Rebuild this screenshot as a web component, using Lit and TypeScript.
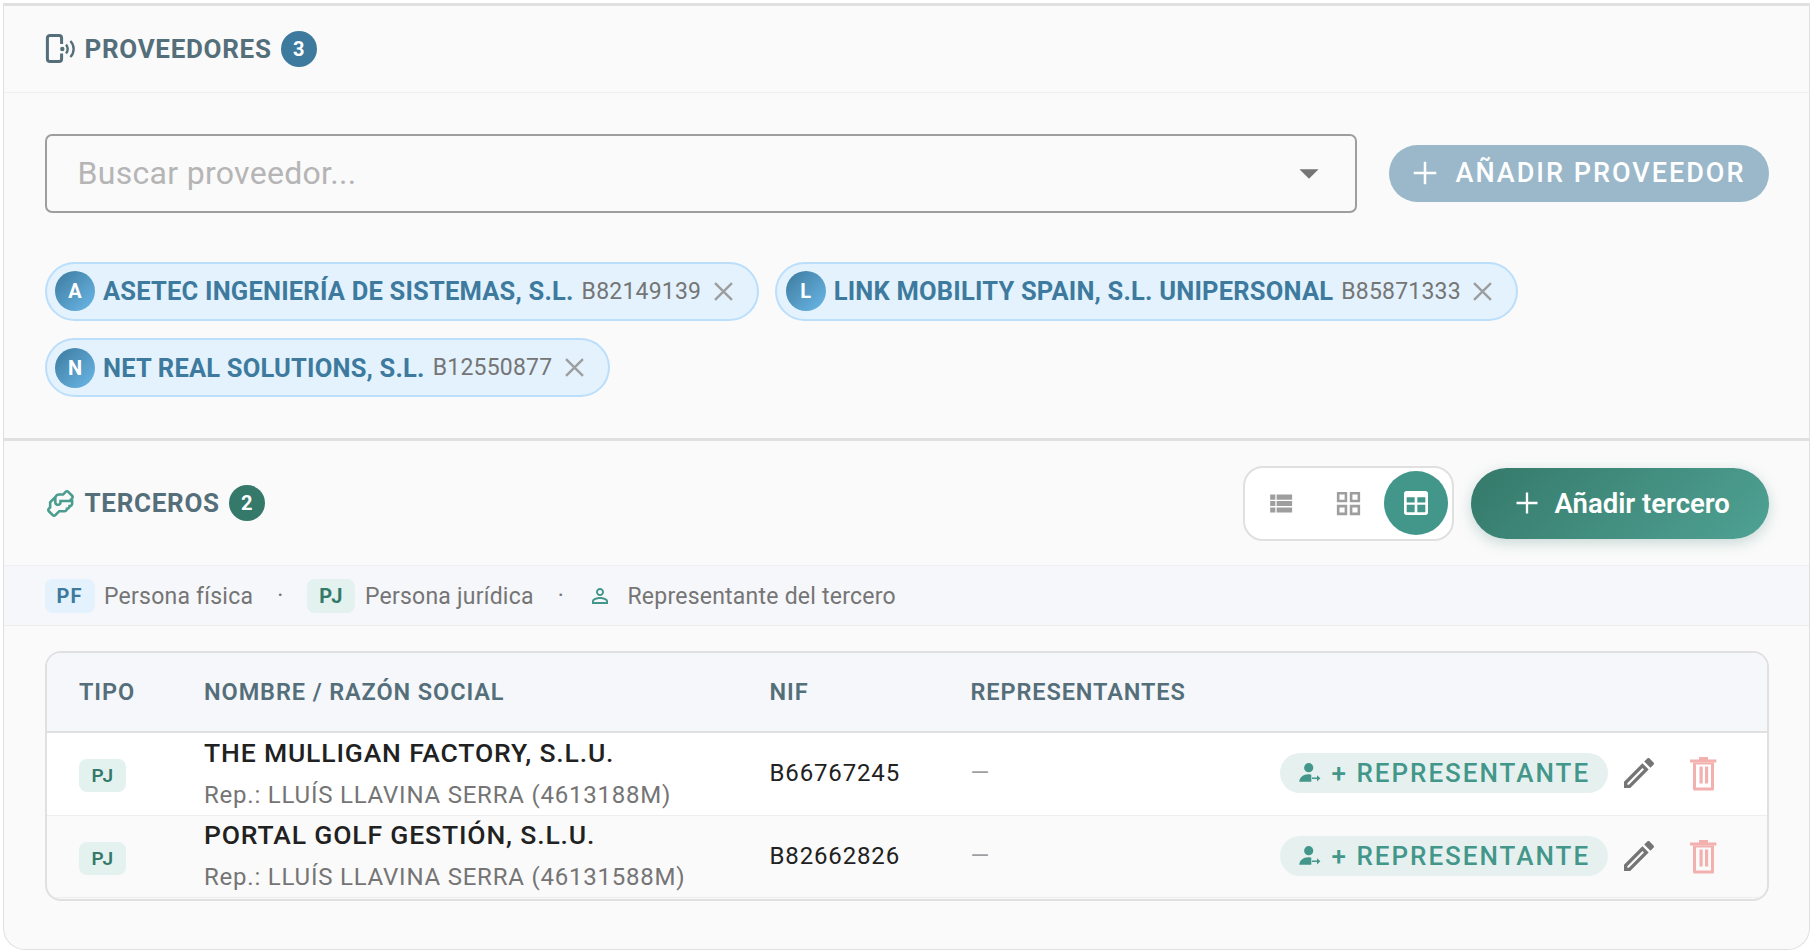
import { LitElement, html, svg, css } from 'lit';
import { customElement } from 'lit/decorators.js';

const PHONE = svg`<path d="M16.6 11V5a2.6 2.6 0 0 0-2.6-2.6H5A2.6 2.6 0 0 0 2.4 5v21A2.6 2.6 0 0 0 5 28.6h9a2.6 2.6 0 0 0 2.6-2.6v-5.5" fill="none" stroke="currentColor" stroke-width="3"/>
  <circle cx="17.3" cy="16" r="2.2" fill="currentColor"/>
  <path d="M21 11.6a6.5 6.5 0 0 1 0 8.8M25.4 8a11.5 11.5 0 0 1 0 16" fill="none" stroke="currentColor" stroke-width="2.4"/>`;
const HANDSHAKE = svg`<path d="M21.71,8.71c1.25-1.25,0.68-2.71,0-3.42l-3-3c-1.26-1.25-2.71-0.68-3.42,0L13.59,4H11C9.1,4,8,5,7.44,6.15L3,10.59v4l-0.71,0.7c-1.25,1.26-0.68,2.71,0,3.42l3,3c0.54,0.54,1.12,0.74,1.67,0.74c0.71,0,1.36-0.35,1.75-0.74l2.7-2.71H15c1.7,0,2.56-1.06,2.87-2.1c1.13-0.3,1.75-1.16,2-2C21.42,14.5,22,13.03,22,12V9h-0.59L21.71,8.71z M20,12c0,0.45-0.19,1-1,1l-1,0l0,1c0,0.45-0.19,1-1,1l-1,0l0,1c0,0.45-0.19,1-1,1h-4.41l-3.28,3.28c-0.31,0.29-0.49,0.12-0.6,0.01l-2.99-2.98c-0.29-0.31-0.12-0.49-0.01-0.6L5,15.41v-4l2-2V11c0,1.21,0.8,3,3,3s3-1.79,3-3h7V12z M20.29,7.29L18.59,9H11v2c0,0.45-0.19,1-1,1s-1-0.55-1-1V8c0-0.46,0.17-2,2-2h3.41l2.28-2.28c0.31-0.29,0.49-0.12,0.6-0.01l2.99,2.98C20.57,7,20.4,7.18,20.29,7.29z" fill="currentColor"/>`;
const LIST = svg`<path d="M4 14h4v-4H4v4zm0 5h4v-4H4v4zM4 9h4V5H4v4zm5 5h12v-4H9v4zm0 5h12v-4H9v4zM9 5v4h12V5H9z" fill="currentColor"/>`;
const GRID = svg`<path d="M3 3v8h8V3H3zm6 6H5V5h4v4zm-6 4v8h8v-8H3zm6 6H5v-4h4v4zm4-16v8h8V3h-8zm6 6h-4V5h4v4zm-6 4v8h8v-8h-8zm6 6h-4v-4h4v4z" fill="currentColor"/>`;
const TABLE = svg`<path fill-rule="evenodd" d="M5 3h14a2 2 0 0 1 2 2v14a2 2 0 0 1-2 2H5a2 2 0 0 1-2-2V5a2 2 0 0 1 2-2zM5 7.6v4h6v-4zM13 7.6v4h6v-4zM5 13.4V19h6v-5.6zM13 13.4V19h6v-5.6z" fill="currentColor"/>`;
const PERSON = svg`<path d="M12 5.9c1.16 0 2.1.94 2.1 2.1s-.94 2.1-2.1 2.1S9.9 9.16 9.9 8s.94-2.1 2.1-2.1m0 9c2.97 0 6.1 1.46 6.1 2.1v1.1H5.9V17c0-.64 3.13-2.1 6.1-2.1M12 4C9.79 4 8 5.79 8 8s1.79 4 4 4 4-1.79 4-4-1.79-4-4-4zm0 9c-2.67 0-8 1.34-8 4v3h16v-3c0-2.66-5.33-4-8-4z" fill="currentColor"/>`;
const PERSON_ARROW = svg`<circle cx="17.7" cy="12.7" r="4.6" fill="currentColor"/><path d="M8.3 26.7c0-4.2 4-7.4 9-7.4 1 0 2 .1 3 .4v7z" fill="currentColor"/><path d="M21 22.5h5v-2.3l3.4 3.1-3.4 3.1v-2.3h-5z" fill="currentColor"/>`;
const EDIT = svg`<path d="M3 17.25V21h3.75L17.81 9.94l-3.75-3.75L3 17.25zM5.92 19H5v-.92l9.06-9.06.92.92L5.92 19zM20.71 5.63l-2.34-2.34c-.2-.2-.45-.29-.71-.29s-.51.1-.7.29l-1.83 1.83 3.75 3.75 1.83-1.83c.39-.39.39-1.02 0-1.41z" fill="currentColor"/>`;
const TRASH = svg`<path d="M18 6h9v2.5h8.4v3H9v-3h9z" fill="currentColor"/>
  <path fill-rule="evenodd" d="M12 11.5h21v26.5a1.5 1.5 0 0 1-1.5 1.5h-18a1.5 1.5 0 0 1-1.5-1.5zM15 13.5V36.5h15V13.5z" fill="currentColor"/>
  <path d="M18.5 15.5h3.2v17h-3.2zM24 15.5h3.2v17H24z" fill="currentColor"/>`;
const X = svg`<path d="M5 5l14 14M19 5L5 19" fill="none" stroke="currentColor" stroke-width="2"/>`;
const PLUS = svg`<path d="M12 3v18M3 12h18" fill="none" stroke="currentColor" stroke-width="2"/>`;

const icon = (body: unknown, size: number, box = 24) =>
  html`<svg width="${size}" height="${size}" viewBox="0 0 ${box} ${box}" aria-hidden="true">${body}</svg>`;

const PROVIDERS = [
  { initial: 'A', name: 'ASETEC INGENIERÍA DE SISTEMAS, S.L.', nif: 'B82149139' },
  { initial: 'L', name: 'LINK MOBILITY SPAIN, S.L. UNIPERSONAL', nif: 'B85871333' },
  { initial: 'N', name: 'NET REAL SOLUTIONS, S.L.', nif: 'B12550877' },
];

const THIRD_PARTIES = [
  { name: 'THE MULLIGAN FACTORY, S.L.U.', rep: 'Rep.: LLUÍS LLAVINA SERRA (4613188M)', nif: 'B66767245' },
  { name: 'PORTAL GOLF GESTIÓN, S.L.U.', rep: 'Rep.: LLUÍS LLAVINA SERRA (46131588M)', nif: 'B82662826' },
];

@customElement('app-root')
export class AppRoot extends LitElement {
  static styles = css`
    :host {
      display: block;
      padding: 2.7px 2px 1px 3px;
      font-family: Roboto, 'Liberation Sans', sans-serif;
      background: #fff;
    }

    .card {
      background: #fafafa;
      border: solid #e0e0e0;
      border-width: 0 1.5px 1.5px;
      border-radius: 0 0 22px 22px;
      height: 947px;
      box-sizing: border-box;
    }

    .section { border-top: 3px solid #e0e0e0; }

    .head {
      display: flex;
      align-items: center;
      height: 86px;
      padding: 0 40.5px;
      border-bottom: 1.5px solid #f0f0f0;
    }

    .title {
      display: flex;
      align-items: center;
      font-size: 26px;
      font-weight: 700;
      letter-spacing: 0.7px;
      color: #546e7a;
    }

    .title svg { display: block; margin-right: 9px; }

    .count {
      width: 36px;
      height: 36px;
      margin-left: 9px;
      border-radius: 50%;
      display: flex;
      align-items: center;
      justify-content: center;
      color: #fff;
      font-size: 20px;
      font-weight: 700;
      letter-spacing: 0;
    }

    .count.blue { background: #3d7a9e; }
    .count.green { background: #35796a; }

    .body { padding: 41px 40.5px 41px 40.5px; }

    .search-row { display: flex; align-items: center; gap: 32px; }

    .search {
      flex: 1;
      height: 79px;
      box-sizing: border-box;
      border: 2px solid #9e9e9e;
      border-radius: 7px;
      padding: 0 23px 0 31px;
      display: flex;
      align-items: center;
      justify-content: space-between;
      color: #b5b5b5;
      font-size: 32px;
      letter-spacing: 0.3px;
    }

    .search svg { color: #757575; display: block; }

    .add {
      width: 380px;
      height: 57px;
      box-sizing: border-box;
      border-radius: 29px;
      background: #9ab8ca;
      color: #fff;
      display: flex;
      align-items: center;
      padding-left: 21px;
      gap: 16px;
      font-size: 27px;
      font-weight: 500;
      letter-spacing: 2px;
    }

    .add svg { display: block; }

    .chips { display: flex; flex-wrap: wrap; gap: 17.5px 16.5px; margin-top: 49px; }

    .chip {
      height: 59px;
      box-sizing: border-box;
      display: flex;
      align-items: center;
      padding: 0 19px 0 8.5px;
      background: #e3f2fd;
      border: 2px solid #bbdefb;
      border-radius: 30px;
    }

    .avatar {
      width: 40px;
      height: 40px;
      border-radius: 50%;
      background: linear-gradient(135deg, #3d7a9e, #6bb8e8);
      color: #fff;
      display: flex;
      align-items: center;
      justify-content: center;
      font-size: 20px;
      font-weight: 700;
    }

    .chip-name {
      margin-left: 8px;
      font-size: 25.5px;
      font-weight: 700;
      letter-spacing: 0.2px;
      color: #3d7a9e;
    }

    .chip-nif {
      margin-left: 8px;
      font-size: 23px;
      letter-spacing: 0.2px;
      color: #757575;
    }

    .chip svg { display: block; margin-left: 7.5px; color: #9e9e9e; }

    .terceros .head {
      height: 125px;
      box-sizing: border-box;
      justify-content: space-between;
    }

    .terceros .title svg { color: #4a9d8e; margin-right: 9px; }

    .tools { display: flex; align-items: center; gap: 17px; }

    .toggle {
      width: 211px;
      height: 75px;
      box-sizing: border-box;
      display: flex;
      align-items: center;
      justify-content: space-between;
      padding: 0 4px;
      border: 2px solid #e0e0e0;
      border-radius: 20px;
      background: #fff;
    }

    .toggle span {
      width: 64px;
      height: 64px;
      border-radius: 50%;
      display: flex;
      align-items: center;
      justify-content: center;
      color: #9e9e9e;
    }

    .toggle span.on { background: #43968a; color: #fff; }

    .cta {
      width: 298px;
      height: 71px;
      box-sizing: border-box;
      border-radius: 36px;
      background: linear-gradient(135deg, #35796a, #4fa294);
      box-shadow: 0 4px 14px rgba(53, 121, 106, 0.25);
      color: #fff;
      display: flex;
      align-items: center;
      padding-left: 42px;
      gap: 14px;
      font-size: 27.5px;
      font-weight: 600;
    }

    .legend {
      height: 60px;
      box-sizing: border-box;
      display: flex;
      align-items: center;
      padding: 0 40.5px;
      background: #f5f7fa;
      border-bottom: 1.5px solid #eeeeee;
      color: #757575;
      font-size: 23px;
      letter-spacing: 0.23px;
    }

    .tag {
      height: 34px;
      box-sizing: border-box;
      display: inline-flex;
      align-items: center;
      justify-content: center;
      border-radius: 8px;
      font-size: 20px;
      font-weight: 700;
      letter-spacing: 1px;
    }

    .tag.pf { width: 50px; background: #e3f2fd; color: #3d7a9e; }
    .tag.pj { width: 48px; background: #e3f2ef; color: #35796a; }

    .legend .label { margin-left: 9.5px; padding-top: 2px; }
    .legend .dot { margin: 0 24px 0 24px; }
    .legend svg { display: block; color: #43968a; margin: 0 15.5px 0 0; }
    .legend .last-label { padding-top: 2px; }

    .table {
      margin: 25px 40.5px 0 40.5px;
      border: 2px solid #e0e0e0;
      border-radius: 16px;
      overflow: hidden;
    }

    .row {
      display: grid;
      grid-template-columns: 157.5px 565.5px 201px 1fr;
      align-items: center;
    }

    .thead {
      height: 78px;
      background: #f5f7fa;
      border-bottom: 2px solid #e0e0e0;
      font-size: 23.5px;
      font-weight: 600;
      letter-spacing: 0.9px;
      color: #546e7a;
    }

    .thead > :first-child,
    .cell-tag { padding-left: 32.5px; }

    .tbody { padding-bottom: 1px; }

    .tbody .row { height: 82.5px; border-bottom: 1.5px solid #eeeeee; box-sizing: border-box; }
    .tbody .row:first-child { background: #fff; }

    .cell-tag { padding-top: 4px; }
    .cell-mid { padding-bottom: 1.5px; }

    .tbody .tag { width: 47px; height: 33px; font-size: 19px; font-weight: 600; letter-spacing: 0.5px; }

    .name {
      font-size: 26.5px;
      font-weight: 500;
      letter-spacing: 0.85px;
      color: #212121;
      line-height: 34px;
    }

    .rep {
      margin-top: 8px;
      font-size: 24px;
      letter-spacing: 0.78px;
      line-height: 34px;
      color: #757575;
    }

    .nif { font-size: 24px; letter-spacing: 0.85px; color: #212121; }
    .none { font-size: 24px; color: #9e9e9e; }

    .last {
      display: flex;
      justify-content: space-between;
      align-items: center;
    }

    .actions {
      display: flex;
      align-items: center;
      padding-right: 42px;
    }

    .rep-btn {
      width: 328px;
      height: 40px;
      box-sizing: border-box;
      border-radius: 20px;
      background: #e6f1ef;
      color: #43968a;
      display: flex;
      align-items: center;
      padding-left: 11px;
      gap: 5px;
      font-size: 26px;
      font-weight: 500;
      letter-spacing: 2px;
    }

    .rep-btn svg { display: block; }

    .edit { color: #757575; margin-left: 11px; display: block; }
    .trash { color: #f2b0ae; margin-left: 22px; display: block; }
  `;

  render() {
    return html`
      <div class="card">
        <section class="section">
          <div class="head">
            <div class="title">
              ${icon(PHONE, 31, 31)}
              PROVEEDORES
              <span class="count blue">3</span>
            </div>
          </div>
          <div class="body">
            <div class="search-row">
              <div class="search">
                <span>Buscar proveedor...</span>
                ${icon(svg`<path d="M7 10l5 5 5-5z" fill="currentColor"/>`, 46)}
              </div>
              <div class="add">${icon(PLUS, 30)}AÑADIR PROVEEDOR</div>
            </div>
            <div class="chips">
              ${PROVIDERS.map(
                (p) => html`
                  <div class="chip">
                    <span class="avatar">${p.initial}</span>
                    <span class="chip-name">${p.name}</span>
                    <span class="chip-nif">${p.nif}</span>
                    ${icon(X, 29)}
                  </div>
                `
              )}
            </div>
          </div>
        </section>
        <section class="section terceros">
          <div class="head">
            <div class="title">
              ${icon(HANDSHAKE, 31)}
              TERCEROS
              <span class="count green">2</span>
            </div>
            <div class="tools">
              <div class="toggle">
                <span>${icon(LIST, 31)}</span>
                <span>${icon(GRID, 31)}</span>
                <span class="on">${icon(TABLE, 32)}</span>
              </div>
              <div class="cta">${icon(PLUS, 28)}Añadir tercero</div>
            </div>
          </div>
          <div class="legend">
            <span class="tag pf">PF</span>
            <span class="label">Persona física</span>
            <span class="dot">·</span>
            <span class="tag pj">PJ</span>
            <span class="label">Persona jurídica</span>
            <span class="dot">·</span>
            ${icon(PERSON, 24)}
            <span class="last-label">Representante del tercero</span>
          </div>
          <div class="table">
            <div class="row thead">
              <span>TIPO</span>
              <span>NOMBRE / RAZÓN SOCIAL</span>
              <span>NIF</span>
              <span>REPRESENTANTES</span>
            </div>
            <div class="tbody">
              ${THIRD_PARTIES.map(
                (t) => html`
                  <div class="row">
                    <div class="cell-tag"><span class="tag pj">PJ</span></div>
                    <div>
                      <div class="name">${t.name}</div>
                      <div class="rep">${t.rep}</div>
                    </div>
                    <div class="nif cell-mid">${t.nif}</div>
                    <div class="last cell-mid">
                      <span class="none">—</span>
                      <div class="actions">
                        <div class="rep-btn">${icon(PERSON_ARROW, 36, 36)}+ REPRESENTANTE</div>
                        <svg class="edit" width="40" height="40" viewBox="0 0 24 24">${EDIT}</svg>
                        <svg class="trash" width="44" height="44" viewBox="0 0 44 44">${TRASH}</svg>
                      </div>
                    </div>
                  </div>
                `
              )}
            </div>
          </div>
        </section>
      </div>
    `;
  }
}
